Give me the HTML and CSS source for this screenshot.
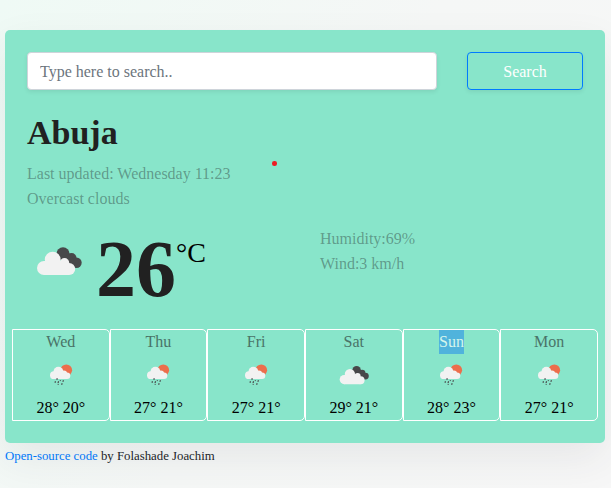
FILE: index.html
```html
<!DOCTYPE html>
<html lang="en">
<head>
<meta charset="utf-8">
<title>Weather</title>
<link rel="stylesheet" href="styles.css">
</head>
<body>
<svg class="defs" width="0" height="0">
  <symbol id="clouds" viewBox="6 6 46 30">
    <g fill="#48484a"><circle cx="33" cy="13.800" r="6.600"/><circle cx="41.500" cy="18" r="5"/><circle cx="46.500" cy="22.700" r="5.200"/><path d="M32 18l8-4 6 10-4 3z"/></g>
    <g fill="#f2f2f2"><circle cx="14" cy="28" r="7"/><circle cx="22.700" cy="19.600" r="7.900"/><circle cx="34.500" cy="22.700" r="4.700"/><circle cx="39.200" cy="29" r="6"/><path d="M14 21h21l4.200 14H14z"/></g>
  </symbol>
  <symbol id="rain" viewBox="9 4 24 23">
    <circle cx="26.300" cy="10.200" r="5.800" fill="#ec6e4c"/>
    <g fill="#f2f2f2"><circle cx="13.900" cy="15.200" r="3.900"/><circle cx="18.400" cy="11.700" r="4.900"/><circle cx="23.800" cy="13.700" r="3.300"/><circle cx="27" cy="15.800" r="3.300"/><path d="M14 12h10l3 7.100H14z"/></g>
    <path d="M17.300 18.300l-.5 1.500M15.500 21.300l-.5 1.500M18.600 21.200l-.6 1.800M20.500 20.300l-.3.700M23.500 20.300l-.7 1.400M18.300 24l-.3.800M22.200 23.300l-.6 1.500" stroke="#48484a" stroke-width="1.200"/>
  </symbol>
</svg>
<main class="weather">
  <form class="search">
    <input class="field" type="text" placeholder="Type here to search..">
    <button class="submit" type="button">Search</button>
  </form>
  <h1>Abuja</h1>
  <ul class="overview">
    <li>Last updated: Wednesday 11:23</li>
    <li>Overcast clouds</li>
  </ul>
  <span class="dot"></span>
  <section class="current">
    <div class="temperature">
      <svg class="icon"><use href="#clouds"/></svg>
      <strong>26</strong><span class="unit">°C</span>
    </div>
    <ul class="details">
      <li>Humidity:69%</li>
      <li>Wind:3 km/h</li>
    </ul>
  </section>
  <section class="forecast">
    <div class="day"><span class="name">Wed</span><svg class="rain"><use href="#rain"/></svg><span class="range">28° 20°</span></div>
    <div class="day"><span class="name">Thu</span><svg class="rain"><use href="#rain"/></svg><span class="range">27° 21°</span></div>
    <div class="day"><span class="name">Fri</span><svg class="rain"><use href="#rain"/></svg><span class="range">27° 21°</span></div>
    <div class="day"><span class="name">Sat</span><svg class="cloudy"><use href="#clouds"/></svg><span class="range">29° 21°</span></div>
    <div class="day"><span class="name selected">Sun</span><svg class="rain"><use href="#rain"/></svg><span class="range">28° 23°</span></div>
    <div class="day"><span class="name">Mon</span><svg class="rain"><use href="#rain"/></svg><span class="range">27° 21°</span></div>
  </section>
</main>
<footer><a href="#">Open-source code</a> by Folashade Joachim</footer>
</body>
</html>
```
FILE: styles.css
```css
* { box-sizing: border-box; }
html { height: 100%; }
body {
  margin: 0;
  height: 488px;
  overflow: hidden;
  padding: 30px 6px 0 5px;
  font: 16px/25px "Liberation Serif", serif;
  color: #212529;
  background: linear-gradient(120deg, #effaf5 0%, #f5f7f6 50%, #f7f7f7 100%);
}
ul { list-style: none; margin: 0; padding: 0; }
.defs { position: absolute; }
.weather {
  height: 413px;
  position: relative;
  padding: 22px 7px 0;
  border-radius: 5px;
  background: #88e5ca;
  box-shadow: 0 16px 42px rgba(50, 50, 70, 0.08);
}
.search { display: flex; gap: 30px; padding: 0 15px; }
.field, .submit {
  height: 38px;
  font: 16px/24px "Liberation Serif", serif;
  border-radius: 4px;
  box-shadow: 0 2px 4px rgba(0, 0, 0, 0.075);
}
.field { width: 410px; padding: 7px 12px 5px; border: 1px solid #ced4da; background: #fff; }
.field::placeholder { color: #6c757d; opacity: 1; }
.submit { width: 116px; padding: 1px 0 0; border: 1px solid #007bff; background: transparent; color: #fff; }
h1 { margin: 22px 15px 7px; font-size: 34px; line-height: 42px; color: #212121; }
.overview { padding: 0 15px; }
.overview, .details { color: rgba(33, 37, 41, 0.4); }
.dot {
  position: absolute;
  left: 267px;
  top: 131px;
  width: 4.500px;
  height: 4.500px;
  border-radius: 50%;
  background: #ed1c24;
}
.current { display: flex; height: 118px; padding: 0 15px; }
.temperature { display: flex; width: 293px; padding: 4px 0 0 9px; }
.icon { width: 46px; height: 30px; margin: 31px 14px 0 0; }
.temperature strong { font-size: 80px; line-height: 108px; color: #212121; }
.unit { padding-top: 22px; font-size: 28px; line-height: 32px; color: #000; }
.details { padding-top: 15px; }
.forecast { display: grid; grid-template-columns: repeat(6, 1fr); }
.day {
  display: flex;
  flex-direction: column;
  align-items: center;
  height: 92px;
  border: 1px solid #fff;
  border-radius: 0 5px 5px 0;
}
.name { line-height: 24px; color: #4a7468; }
.selected { background: #50b3dc; color: #d5f5ec; }
.rain { width: 24px; height: 23px; margin: 10px 0 9px; }
.cloudy { width: 30px; height: 20px; margin: 11px 0; }
.range { line-height: 24px; color: #000; }
footer { font-size: 12.800px; line-height: 26px; }
footer a { color: #007bff; text-decoration: none; }
```
